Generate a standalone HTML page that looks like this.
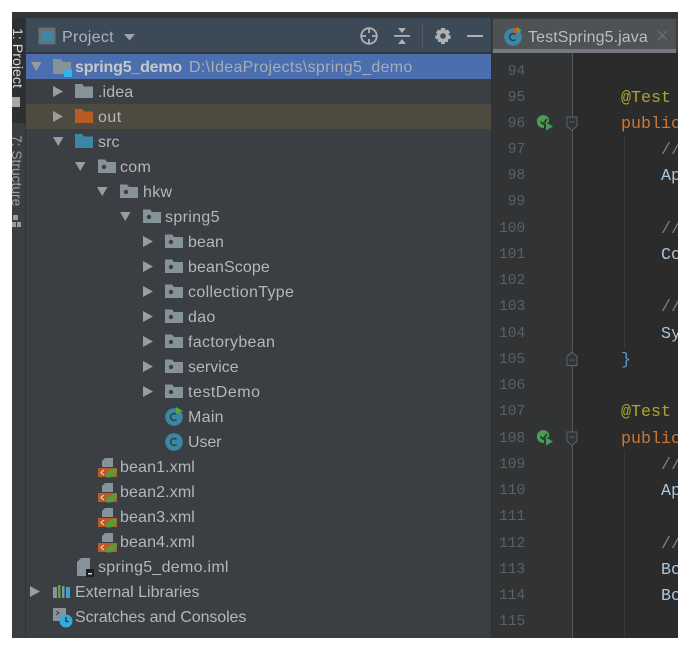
<!DOCTYPE html>
<html><head><meta charset="utf-8">
<style>
html,body{margin:0;padding:0;background:#fff}
#f{position:relative;width:691px;height:650px;overflow:hidden;background:#fff;font-family:"Liberation Sans",sans-serif}
#f div,#f svg{position:absolute}
.t{color:#b4b8ba;font-size:16px;line-height:25px;height:25px;margin-top:1px;white-space:nowrap;letter-spacing:.1px}
.n{color:#5c6063;font:14.6px/26px "Liberation Mono",monospace;width:30px;left:499px;margin-top:1px;white-space:nowrap;letter-spacing:0}
.c{font:16.67px/26px "Liberation Mono",monospace;white-space:pre;margin-top:2px}
</style></head><body>
<div id="f">
<svg width="0" height="0" style="left:0;top:0">
<defs>
<g id="ar"><path d="M0 1L10 6.500L0 12Z" fill="#9a9c9e"/></g>
<g id="ad"><path d="M0 2H10.500L5.250 11Z" fill="#9a9c9e"/></g>
<g id="pk"><path d="M0 1.500H7L9 4H18V15H0Z" fill="#87939a"/><circle cx="6" cy="9" r="2.200" fill="#3b3e42"/></g>
<g id="cl"><circle cx="9" cy="9" r="8.800" fill="#3d87a6"/><path d="M11.500 6.500A3.500 3.500 0 1 0 11.500 11.500" fill="none" stroke="#2f3d45" stroke-width="1.500"/></g>
<g id="xm"><path d="M7 0H15V9H4V3Z" fill="#87939a"/><path d="M0 10H19V19H0Z" fill="#b85b25"/><path d="M6 12L3 14.500L6 17" stroke="#e8d8c8" stroke-width="1.100" fill="none"/><path d="M8 19C8 13 13 11 19 11C19 16 16 19.500 11 19.500C10 19.500 9 19.500 8 19Z" fill="#5a9a3d"/></g>
</defs>
</svg>

<!-- frame -->
<div style="left:12px;top:12px;width:666px;height:626px;background:#3b3e42"></div>
<div style="left:12px;top:12px;width:666px;height:6px;background:#333537"></div>
<!-- left tool strip -->
<div style="left:12px;top:18px;width:13px;height:620px;background:#3c3f41"></div>
<div style="left:12px;top:18px;width:13px;height:105px;background:#2d2f30"></div>
<div style="left:25px;top:18px;width:1px;height:620px;background:#303234"></div>
<div style="left:12px;top:28px;width:13px;height:60px;overflow:visible"><div style="transform:rotate(90deg);transform-origin:0 0;left:11px;top:0;width:70px;color:#d8d8d8;font-size:14.200px;line-height:13px;white-space:nowrap">1: Project</div></div>
<div style="left:12px;top:97px;width:8px;height:10px;background:#a8a8a8"></div>
<div style="left:12px;top:135px;width:13px;height:70px"><div style="transform:rotate(90deg);transform-origin:0 0;left:11px;top:0;width:80px;color:#a0a2a4;font-size:13.800px;line-height:13px;white-space:nowrap">7: Structure</div></div>
<svg style="left:12px;top:214px" width="9" height="14"><rect x="1" y="1" width="5" height="5" fill="#9a9c9e"/><rect x="0" y="8" width="4" height="5" fill="#9a9c9e"/><rect x="5" y="8" width="4" height="5" fill="#9a9c9e"/></svg>

<!-- project header -->
<div style="left:26px;top:18px;width:465px;height:34px;background:#3c4956"></div>
<div style="left:26px;top:52px;width:465px;height:2px;background:#323537"></div>
<svg style="left:38px;top:27px" width="18" height="18"><rect x=".5" y=".5" width="17" height="17" fill="#6a7075"/><rect x="3" y="4" width="12" height="10" fill="#3e86a5"/></svg>
<div class="t" style="left:62px;top:24px;color:#aeb3b7;letter-spacing:.3px">Project</div>
<svg style="left:124px;top:34px" width="12" height="8"><path d="M0 0H11L5.500 6.500Z" fill="#9ea3a7"/></svg>
<svg style="left:360px;top:27px" width="18" height="18" fill="none" stroke="#afb1b3" stroke-width="1.800"><circle cx="9" cy="9" r="7.800"/><path d="M9 1V6M9 12V17M1 9H6M12 9H17"/></svg>
<svg style="left:394px;top:27px" width="17" height="18" fill="#afb1b3"><rect x="0" y="8" width="16" height="1.800"/><path d="M4 1H12L8 6ZM4 17H12L8 12Z"/></svg>
<div style="left:422px;top:23px;width:1px;height:26px;background:#565b60"></div>
<svg style="left:434px;top:27px" width="18" height="18"><path d="M7 1H11L11.500 3.500L13.800 2.500L16 5.500L14.300 7.500L17 9L16 12.500L14 12L14 15L11 15L11 17H7L7 15L4 15L4 12L2 12.500L1 9L3.700 7.500L2 5.500L4.200 2.500L6.500 3.500Z" fill="#afb1b3"/><circle cx="9" cy="9" r="2.800" fill="#3c4956"/></svg>
<div style="left:467px;top:35px;width:16px;height:2px;background:#afb1b3"></div>

<!-- rows -->
<div style="left:26px;top:54px;width:465px;height:25px;background:#4b6eaf"></div>
<div style="left:26px;top:104px;width:465px;height:25px;background:#4d4a3f"></div>

<svg style="left:31px;top:60px" width="14" height="13"><use href="#ad"/></svg>
<svg style="left:53px;top:57px" width="20" height="20"><path d="M0 2H8L10 5H18V17H0Z" fill="#87939a"/><rect x="11" y="12" width="8" height="8" fill="#35b0e8"/></svg>
<div class="t" style="left:75px;top:54px;color:#c6c8cb;font-weight:bold;letter-spacing:-.2px">spring5_demo</div>
<div class="t" style="left:189px;top:54px;color:#a5adb8;letter-spacing:.3px">D:\IdeaProjects\spring5_demo</div>

<svg style="left:53px;top:85px" width="14" height="13"><use href="#ar"/></svg>
<svg style="left:75px;top:83px" width="18" height="16"><path d="M0 1H7L9 3.500H18V15H0Z" fill="#87939a"/></svg>
<div class="t" style="left:98px;top:79px">.idea</div>

<svg style="left:53px;top:110px" width="14" height="13"><use href="#ar"/></svg>
<svg style="left:75px;top:108px" width="18" height="16"><path d="M0 1H7L9 3.500H18V15H0Z" fill="#b85b25"/></svg>
<div class="t" style="left:98px;top:104px;letter-spacing:.5px">out</div>

<svg style="left:53px;top:135px" width="14" height="13"><use href="#ad"/></svg>
<svg style="left:75px;top:133px" width="18" height="16"><path d="M0 1H7L9 3.500H18V15H0Z" fill="#3d87a6"/></svg>
<div class="t" style="left:98px;top:129px">src</div>

<svg style="left:75px;top:160px" width="14" height="13"><use href="#ad"/></svg>
<svg style="left:98px;top:158px" width="18" height="16"><use href="#pk"/></svg>
<div class="t" style="left:120px;top:154px;letter-spacing:.3px">com</div>

<svg style="left:97px;top:185px" width="14" height="13"><use href="#ad"/></svg>
<svg style="left:120px;top:183px" width="18" height="16"><use href="#pk"/></svg>
<div class="t" style="left:143px;top:179px;letter-spacing:.3px">hkw</div>

<svg style="left:120px;top:210px" width="14" height="13"><use href="#ad"/></svg>
<svg style="left:143px;top:208px" width="18" height="16"><use href="#pk"/></svg>
<div class="t" style="left:165px;top:204px;letter-spacing:.35px">spring5</div>

<svg style="left:143px;top:235px" width="14" height="13"><use href="#ar"/></svg>
<svg style="left:165px;top:233px" width="18" height="16"><use href="#pk"/></svg>
<div class="t" style="left:188px;top:229px">bean</div>

<svg style="left:143px;top:260px" width="14" height="13"><use href="#ar"/></svg>
<svg style="left:165px;top:258px" width="18" height="16"><use href="#pk"/></svg>
<div class="t" style="left:188px;top:254px">beanScope</div>

<svg style="left:143px;top:285px" width="14" height="13"><use href="#ar"/></svg>
<svg style="left:165px;top:283px" width="18" height="16"><use href="#pk"/></svg>
<div class="t" style="left:188px;top:279px;letter-spacing:.35px">collectionType</div>

<svg style="left:143px;top:310px" width="14" height="13"><use href="#ar"/></svg>
<svg style="left:165px;top:308px" width="18" height="16"><use href="#pk"/></svg>
<div class="t" style="left:188px;top:304px;letter-spacing:.3px">dao</div>

<svg style="left:143px;top:335px" width="14" height="13"><use href="#ar"/></svg>
<svg style="left:165px;top:333px" width="18" height="16"><use href="#pk"/></svg>
<div class="t" style="left:188px;top:329px;letter-spacing:.33px">factorybean</div>

<svg style="left:143px;top:360px" width="14" height="13"><use href="#ar"/></svg>
<svg style="left:165px;top:358px" width="18" height="16"><use href="#pk"/></svg>
<div class="t" style="left:188px;top:354px;letter-spacing:0">service</div>

<svg style="left:143px;top:385px" width="14" height="13"><use href="#ar"/></svg>
<svg style="left:165px;top:383px" width="18" height="16"><use href="#pk"/></svg>
<div class="t" style="left:188px;top:379px;letter-spacing:.5px">testDemo</div>

<svg style="left:165px;top:407px" width="20" height="19"><use href="#cl" y="1"/><path d="M11 0L18 4L11 7Z" fill="#59a83b"/></svg>
<div class="t" style="left:188px;top:404px;letter-spacing:.3px">Main</div>
<svg style="left:165px;top:433px" width="18" height="18"><use href="#cl"/></svg>
<div class="t" style="left:188px;top:429px;letter-spacing:-.1px">User</div>

<svg style="left:98px;top:458px" width="20" height="20"><use href="#xm"/></svg>
<div class="t" style="left:120px;top:454px;letter-spacing:.13px">bean1.xml</div>
<svg style="left:98px;top:483px" width="20" height="20"><use href="#xm"/></svg>
<div class="t" style="left:120px;top:479px;letter-spacing:.13px">bean2.xml</div>
<svg style="left:98px;top:508px" width="20" height="20"><use href="#xm"/></svg>
<div class="t" style="left:120px;top:504px;letter-spacing:.13px">bean3.xml</div>
<svg style="left:98px;top:533px" width="20" height="20"><use href="#xm"/></svg>
<div class="t" style="left:120px;top:529px;letter-spacing:.13px">bean4.xml</div>

<svg style="left:77px;top:558px" width="18" height="19"><path d="M4 0H13V18H0V4Z" fill="#87939a"/><rect x="9" y="11" width="8" height="8" fill="#1f1f1f"/><rect x="11" y="15" width="4" height="1.500" fill="#ddd"/></svg>
<div class="t" style="left:98px;top:554px;letter-spacing:.28px">spring5_demo.iml</div>

<svg style="left:30px;top:585px" width="14" height="13"><use href="#ar"/></svg>
<svg style="left:53px;top:584px" width="18" height="15"><rect x="0" y="3" width="4" height="11" fill="#87939a"/><rect x="5" y="1" width="2.500" height="13" fill="#59a83b"/><rect x="9" y="2" width="2.500" height="12" fill="#87939a"/><rect x="13" y="3" width="4" height="11" fill="#35a5d8"/></svg>
<div class="t" style="left:75px;top:579px;letter-spacing:0">External Libraries</div>

<svg style="left:53px;top:608px" width="20" height="20"><path d="M0 0H13V13H0Z" fill="#87939a"/><path d="M3 3L6 5L3 7" stroke="#3b3e42" fill="none"/><circle cx="13" cy="13" r="6.500" fill="#35a8dd"/><path d="M13 9V13.500H15.500" stroke="#20333f" stroke-width="1.300" fill="none"/></svg>
<div class="t" style="left:75px;top:604px;letter-spacing:-.1px">Scratches and Consoles</div>

<!-- editor -->
<div style="left:491px;top:18px;width:1px;height:620px;background:#2f3133"></div>
<div style="left:492px;top:18px;width:186px;height:35px;background:#3c3f41"></div>
<div style="left:493px;top:19px;width:183px;height:30px;background:#4e5254"></div>
<div style="left:493px;top:49px;width:183px;height:4px;background:#747a80"></div>
<svg style="left:504px;top:27px" width="20" height="20"><circle cx="9" cy="10" r="8.800" fill="#3d87a6"/><path d="M11.500 7.500A3.500 3.500 0 1 0 11.500 12.500" fill="none" stroke="#2f3d45" stroke-width="1.500"/><path d="M10 1H13V6H10Z" fill="#c75f2a"/><path d="M13 0L18 3.500L13 6Z" fill="#59a83b"/></svg>
<div class="t" style="left:528px;top:24px;color:#b9bdc0">TestSpring5.java</div>
<svg style="left:657px;top:30px" width="12" height="12" stroke="#6a6e71" stroke-width="1.300"><path d="M1 1L10 10M10 1L1 10"/></svg>

<div style="left:492px;top:53px;width:81px;height:585px;background:#313335"></div>
<div style="left:573px;top:53px;width:105px;height:585px;background:#2b2b2b"></div>
<div style="left:572px;top:53px;width:1px;height:585px;background:#555759"></div>
<div style="left:624px;top:136px;width:1px;height:212px;background:#3a3a3a"></div>
<div style="left:624px;top:450px;width:1px;height:188px;background:#3a3a3a"></div>

<div class="n" style="top:58px">&nbsp;94</div>
<div class="n" style="top:84px">&nbsp;95</div>
<div class="n" style="top:110px">&nbsp;96</div>
<div class="n" style="top:136px">&nbsp;97</div>
<div class="n" style="top:162px">&nbsp;98</div>
<div class="n" style="top:188px">&nbsp;99</div>
<div class="n" style="top:215px">100</div>
<div class="n" style="top:241px">101</div>
<div class="n" style="top:267px">102</div>
<div class="n" style="top:293px">103</div>
<div class="n" style="top:320px">104</div>
<div class="n" style="top:346px">105</div>
<div class="n" style="top:372px">106</div>
<div class="n" style="top:398px">107</div>
<div class="n" style="top:425px">108</div>
<div class="n" style="top:451px">109</div>
<div class="n" style="top:477px">110</div>
<div class="n" style="top:503px">111</div>
<div class="n" style="top:530px">112</div>
<div class="n" style="top:556px">113</div>
<div class="n" style="top:582px">114</div>
<div class="n" style="top:608px">115</div>

<!-- run icons & folds -->
<svg style="left:537px;top:115px" width="17" height="17"><path d="M12 3.500A6.500 6.500 0 1 0 7 13L7 9L10 7.500L12 7Z" fill="#499c54"/><path d="M3.500 6.500L6 9L10 4" stroke="#2b2b2b" stroke-width="1.500" fill="none"/><path d="M9 7.500L16 11.500L9 15.500Z" fill="#499c54"/></svg>
<svg style="left:537px;top:430px" width="17" height="17"><path d="M12 3.500A6.500 6.500 0 1 0 7 13L7 9L10 7.500L12 7Z" fill="#499c54"/><path d="M3.500 6.500L6 9L10 4" stroke="#2b2b2b" stroke-width="1.500" fill="none"/><path d="M9 7.500L16 11.500L9 15.500Z" fill="#499c54"/></svg>
<svg style="left:566px;top:116px" width="13" height="16"><path d="M1 1H11V10L6 14.500L1 10Z" fill="#313335" stroke="#606366"/><path d="M3.500 6H8.500" stroke="#606366"/></svg>
<svg style="left:566px;top:431px" width="13" height="16"><path d="M1 1H11V10L6 14.500L1 10Z" fill="#313335" stroke="#606366"/><path d="M3.500 6H8.500" stroke="#606366"/></svg>
<svg style="left:566px;top:351px" width="13" height="16"><path d="M1 14.500H11V5.500L6 1L1 5.500Z" fill="#313335" stroke="#606366"/><path d="M3.500 9H8.500" stroke="#606366"/></svg>

<!-- code -->
<div style="left:573px;top:53px;width:105px;height:585px;overflow:hidden">
<div class="c" style="left:48px;top:31px;color:#a8a82e">@Test</div>
<div class="c" style="left:48px;top:57px;color:#cc7832">public</div>
<div class="c" style="left:88px;top:83px;color:#808080">//</div>
<div class="c" style="left:88px;top:109px;color:#a9c6e0">Ap</div>
<div class="c" style="left:88px;top:162px;color:#808080">//</div>
<div class="c" style="left:88px;top:188px;color:#a9c6e0">Co</div>
<div class="c" style="left:88px;top:240px;color:#808080">//</div>
<div class="c" style="left:88px;top:267px;color:#a9c6e0">Sy</div>
<div class="c" style="left:48px;top:293px;color:#5a9bd8">}</div>
<div class="c" style="left:48px;top:345px;color:#a8a82e">@Test</div>
<div class="c" style="left:48px;top:372px;color:#cc7832">public</div>
<div class="c" style="left:88px;top:398px;color:#808080">//</div>
<div class="c" style="left:88px;top:424px;color:#a9c6e0">Ap</div>
<div class="c" style="left:88px;top:477px;color:#808080">//</div>
<div class="c" style="left:88px;top:503px;color:#a9c6e0">Bo</div>
<div class="c" style="left:88px;top:529px;color:#a9c6e0">Bo</div>
</div>
</div>
</body></html>
